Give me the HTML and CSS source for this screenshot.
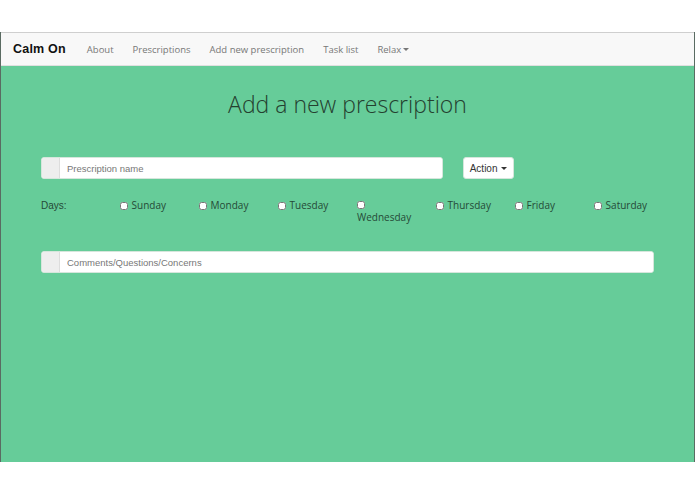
FILE: index.html
```html
<!DOCTYPE html>
<html lang="en">
<head>
  <meta charset="UTF-8" />
  <meta name="viewport" content="width=device-width, initial-scale=1.0" />
  <title>Calm On - Add a new prescription</title>
  <link rel="stylesheet" href="styles.css">
</head>
<body>

  <div class="frame">
    <nav class="navbar">
      <div class="brand">Calm On</div>
      <a href="#">About</a>
      <a href="#">Prescriptions</a>
      <a href="#">Add new prescription</a>
      <a href="#">Task list</a>
      <a href="#">Relax<span class="caret"></span></a>
    </nav>

    <main>
      <h1>Add a new prescription</h1>

      <div class="row">
        <div class="input-group name-group">
          <span class="addon"></span>
          <input type="text" placeholder="Prescription name" />
        </div>
        <button class="action-btn">Action <span class="caret dark"></span></button>
      </div>

      <div class="days">
        <div class="days-label">Days:</div>
        <label><input type="checkbox" /> Sunday</label>
        <label><input type="checkbox" /> Monday</label>
        <label><input type="checkbox" /> Tuesday</label>
        <label class="wrap"><input type="checkbox" /> Wednesday</label>
        <label><input type="checkbox" /> Thursday</label>
        <label><input type="checkbox" /> Friday</label>
        <label><input type="checkbox" /> Saturday</label>
      </div>

      <div class="input-group">
        <span class="addon"></span>
        <input type="text" placeholder="Comments/Questions/Concerns" />
      </div>
    </main>
  </div>

</body>
</html>
```

FILE: styles.css
```css
body {
  margin: 0;
  padding: 0;
  background: #fff;
  font-family: "Open Sans", Arial, sans-serif;
}

.frame {
  margin-top: 32px;
  height: 430px;
  background: #66cc99;
  border-left: 1px solid #5a6b62;
  border-right: 1px solid #5a6b62;
  box-sizing: border-box;
}

.navbar {
  height: 34px;
  background: #f8f8f8;
  border-top: 1px solid #cfcfcf;
  border-bottom: 1px solid #e0e0e0;
  box-sizing: border-box;
  display: flex;
  align-items: center;
  gap: 19px;
  padding-left: 12px;
}

.brand {
  font-family: "Liberation Sans", Arial, sans-serif;
  font-weight: bold;
  font-size: 12.5px;
  color: #111;
  margin-right: 2px;
  letter-spacing: 0.2px;
}

.navbar a {
  font-size: 9.5px;
  color: #777;
  text-decoration: none;
}

.caret {
  display: inline-block;
  width: 0;
  height: 0;
  margin-left: 2px;
  vertical-align: middle;
  border-top: 3px solid #777;
  border-left: 3px solid transparent;
  border-right: 3px solid transparent;
}

.caret.dark {
  border-top-color: #333;
  margin-left: 1px;
}

main {
  padding: 0 40px;
}

h1 {
  margin: 22px 0 0;
  height: 69px;
  font-weight: 300;
  font-size: 23px;
  color: #24402f;
  text-align: center;
  line-height: 32px;
}

.row {
  display: flex;
  gap: 20px;
}

.input-group {
  display: flex;
  height: 22px;
  background: #fff;
  border: 1px solid #d6e6dc;
  border-radius: 3px;
  box-sizing: border-box;
  overflow: hidden;
}

.name-group {
  width: 402px;
}

.addon {
  width: 17px;
  background: #eee;
  border-right: 1px solid #ddd;
}

.input-group input {
  flex: 1;
  border: none;
  outline: none;
  padding: 0 7px;
  font-family: "Liberation Sans", Arial, sans-serif;
  font-size: 9.5px;
  color: #555;
  background: #fff;
}

.input-group input::placeholder {
  color: #777;
}

.action-btn {
  width: 51px;
  height: 22px;
  background: #fff;
  border: 1px solid #d6e6dc;
  border-radius: 3px;
  font-family: "Liberation Sans", Arial, sans-serif;
  font-size: 10px;
  color: #333;
  padding: 0;
}

.days {
  display: grid;
  grid-template-columns: repeat(8, 79px);
  margin: 20px 0 25px;
  height: 27px;
  font-size: 10px;
  color: #254a37;
}

.days-label {
  font-family: "Liberation Sans", Arial, sans-serif;
  font-size: 10px;
  padding-top: 1px;
}

.days label {
  display: block;
  line-height: 13px;
}

.days input {
  width: 8px;
  height: 8px;
  margin: 0 1px 0 0;
  vertical-align: -1px;
}

.days .wrap input {
  display: block;
  margin: 2px 0 2px;
}
```
